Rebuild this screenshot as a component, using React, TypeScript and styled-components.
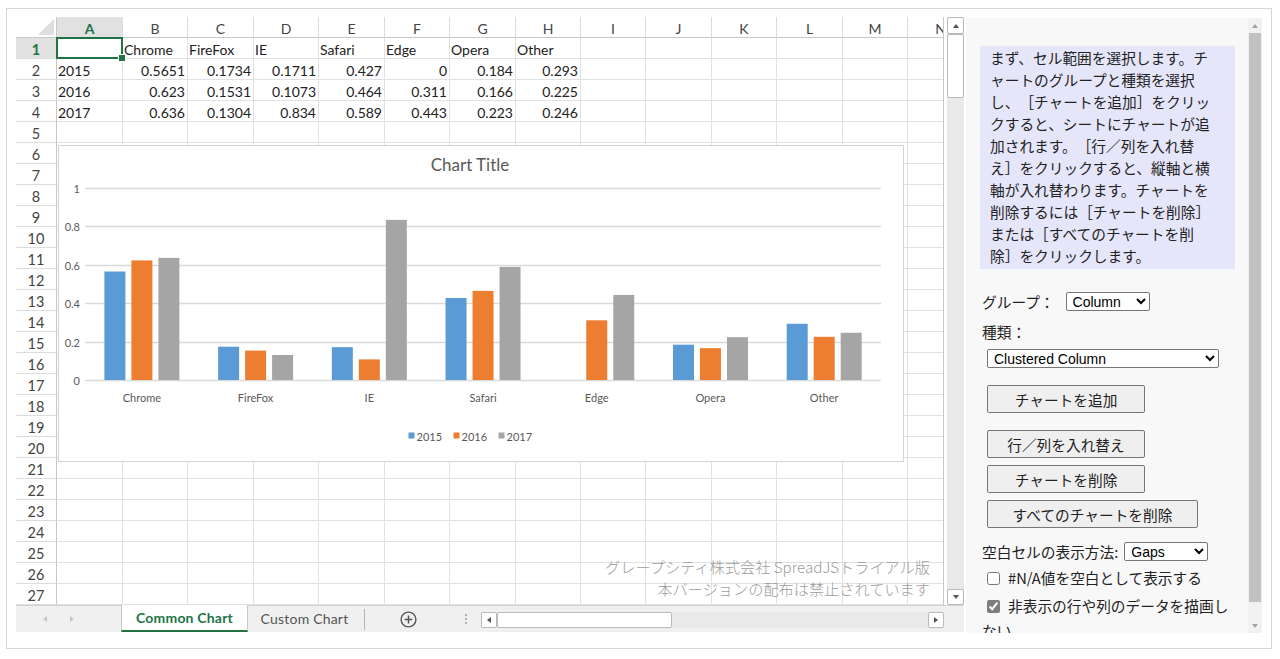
import React from 'react';
import styled, { createGlobalStyle } from 'styled-components';

const GlobalStyle = createGlobalStyle`
  body {
    margin: 0;
    background: #fff;
    font-family: Lato, "Noto Sans CJK JP", sans-serif;
  }
  * { box-sizing: border-box; }
`;

const COLS = ['A', 'B', 'C', 'D', 'E', 'F', 'G', 'H', 'I', 'J', 'K', 'L', 'M', 'N'];
const COL_W = [66, 65, 66, 65, 66, 65, 66, 65, 65, 66, 65, 66, 65, 66];
const ROW_COUNT = 27;

const TABLE: string[][] = [
  ['', 'Chrome', 'FireFox', 'IE', 'Safari', 'Edge', 'Opera', 'Other'],
  ['2015', '0.5651', '0.1734', '0.1711', '0.427', '0', '0.184', '0.293'],
  ['2016', '0.623', '0.1531', '0.1073', '0.464', '0.311', '0.166', '0.225'],
  ['2017', '0.636', '0.1304', '0.834', '0.589', '0.443', '0.223', '0.246'],
];

const CATEGORIES = ['Chrome', 'FireFox', 'IE', 'Safari', 'Edge', 'Opera', 'Other'];
const SERIES = [
  { name: '2015', color: '#5b9bd5', values: [0.5651, 0.1734, 0.1711, 0.427, 0, 0.184, 0.293] },
  { name: '2016', color: '#ed7d31', values: [0.623, 0.1531, 0.1073, 0.464, 0.311, 0.166, 0.225] },
  { name: '2017', color: '#a5a5a5', values: [0.636, 0.1304, 0.834, 0.589, 0.443, 0.223, 0.246] },
];

const DESCRIPTION = [
  'まず、セル範囲を選択します。チ',
  'ャートのグループと種類を選択',
  'し、［チャートを追加］をクリッ',
  'クすると、シートにチャートが追',
  '加されます。［行／列を入れ替',
  'え］をクリックすると、縦軸と横',
  '軸が入れ替わります。チャートを',
  '削除するには［チャートを削除］',
  'または［すべてのチャートを削',
  '除］をクリックします。',
];

/* ---------- frame ---------- */

const Frame = styled.div`
  margin: 8px 0 0 6px;
  width: 1266px;
  height: 641px;
  border: 1px solid #d6d6d6;
  padding: 8px 0 0 9px;
  display: flex;
  align-items: flex-start;
`;

const Spread = styled.div`
  width: 948px;
  height: 615px;
  display: flex;
  flex-direction: column;
`;

const SheetArea = styled.div`
  height: 588px;
  display: flex;
`;

const Viewport = styled.div`
  position: relative;
  width: 928px;
  height: 588px;
  overflow: hidden;
  border-right: 1px solid #c8c8c8;
`;

const Grid = styled.div<{ $cols: string }>`
  display: grid;
  grid-template-columns: ${(p) => p.$cols};
  grid-auto-rows: 21px;
  width: max-content;
`;

const Corner = styled.div`
  position: relative;
  border-right: 1px solid #c8c8c8;
  border-bottom: 1px solid #c8c8c8;
  &::after {
    content: '';
    position: absolute;
    right: 2px;
    bottom: 2px;
    width: 16px;
    height: 16px;
    background: #dedede;
    clip-path: polygon(100% 0, 100% 100%, 0 100%);
  }
`;

const ColHead = styled.div<{ $active?: boolean }>`
  border-right: 1px solid #dcdcdc;
  border-bottom: 1px solid #c8c8c8;
  background: ${(p) => (p.$active ? '#e1e1e1' : '#fff')};
  color: ${(p) => (p.$active ? '#217346' : '#444')};
  font-weight: ${(p) => (p.$active ? 700 : 400)};
  font-size: 14px;
  line-height: 18px;
  padding-top: 3px;
  text-align: center;
  overflow: hidden;
`;

const RowHead = styled(ColHead)`
  border-right: 1px solid #c8c8c8;
  border-bottom: 1px solid #dcdcdc;
  font-size: 14.5px;
`;

const Cell = styled.div<{ $align: 'left' | 'right'; $selected?: boolean }>`
  position: relative;
  border-right: 1px solid #e1e1e1;
  border-bottom: 1px solid #e1e1e1;
  padding: 3px 2px 0 1px;
  font-size: 14px;
  line-height: 18px;
  color: #222;
  text-align: ${(p) => p.$align};
  white-space: nowrap;
  overflow: ${(p) => (p.$selected ? 'visible' : 'hidden')};
  z-index: ${(p) => (p.$selected ? 2 : 0)};
  ${(p) =>
    p.$selected &&
    `
    box-shadow: inset 0 0 0 2px #217346;
    margin: -1px 0 0 -1px;
    border: none;
    width: calc(100% + 1px);
    height: calc(100% + 1px);
    &::after {
      content: '';
      position: absolute;
      right: -3px;
      bottom: -3px;
      width: 6px;
      height: 6px;
      background: #217346;
      border: 1px solid #fff;
    }
  `}
`;

/* ---------- chart ---------- */

const ChartBox = styled.div`
  position: absolute;
  left: 42px;
  top: 128px;
  width: 846px;
  height: 317px;
  background: #fff;
  border: 1px solid #d4d4d4;
`;

const ChartText = styled.text<{ $size: number }>`
  font-family: Lato, sans-serif;
  font-size: ${(p) => p.$size}px;
  fill: #595959;
`;

const PLOT = { left: 26, right: 822, top: 42, bottom: 234 };

const Chart = () => {
  const h = PLOT.bottom - PLOT.top;
  const groupW = (PLOT.right - PLOT.left) / CATEGORIES.length;
  const ticks = [0, 0.2, 0.4, 0.6, 0.8, 1];
  return (
    <ChartBox>
      <svg width="844" height="315" viewBox="0 0 844 315">
        <ChartText $size={17} x={411} y={25} textAnchor="middle">Chart Title</ChartText>
        {ticks.map((t) => {
          const y = Math.round(PLOT.bottom - t * h) + 0.5;
          return (
            <g key={t}>
              <line x1={PLOT.left} x2={PLOT.right} y1={y} y2={y} stroke="#d9d9d9" strokeWidth="1.4" />
              <ChartText $size={11} x={21} y={y + 4} textAnchor="end">{String(t)}</ChartText>
            </g>
          );
        })}
        {CATEGORIES.map((c, gi) => {
          const gx = PLOT.left + gi * groupW;
          return (
            <g key={c}>
              {SERIES.map((s, si) => {
                const bh = s.values[gi] * h;
                return bh > 0 ? (
                  <rect key={s.name} x={gx + 19.4 + si * 27} y={PLOT.bottom - bh} width={21} height={bh}
                    fill={s.color} />
                ) : null;
              })}
              <ChartText $size={11} x={gx + groupW / 2} y={256} textAnchor="middle">{c}</ChartText>
            </g>
          );
        })}
        {SERIES.map((s, i) => (
          <g key={s.name}>
            <rect x={349.5 + i * 45} y={286.5} width={6} height={6} fill={s.color} />
            <ChartText $size={11} x={357.5 + i * 45} y={295}>{s.name}</ChartText>
          </g>
        ))}
      </svg>
    </ChartBox>
  );
};

const Watermark = styled.div`
  position: absolute;
  right: 13px;
  bottom: 6px;
  text-align: right;
  font-family: "Noto Sans CJK JP", sans-serif;
  font-weight: 300;
  font-size: 15.2px;
  line-height: 22px;
  color: #9c9c9c;
`;

/* ---------- scrollbars ---------- */

const VScroll = styled.div`
  width: 20px;
  padding-left: 3px;
  display: flex;
  flex-direction: column;
  background: #fff;
`;

const VTrack = styled.div`
  flex: 1;
  background: #e9e9e9;
  display: flex;
  flex-direction: column;
`;

const ScrollBtn = styled.div<{ $w?: number; $h?: number }>`
  width: ${(p) => (p.$w ? `${p.$w}px` : '100%')};
  height: ${(p) => (p.$h ? `${p.$h}px` : '100%')};
  flex-shrink: 0;
  background: #fff;
  border: 1px solid #b9b9b9;
  border-radius: 2px;
  display: flex;
  align-items: center;
  justify-content: center;
`;

const Tri = styled.span<{ $dir: 'up' | 'down' | 'left' | 'right'; $color?: string }>`
  width: 0;
  height: 0;
  border: 4px solid transparent;
  ${(p) => {
    const c = p.$color || '#666';
    if (p.$dir === 'up') return `border-bottom: 4px solid ${c}; border-top-width: 0; border-left-width: 3.5px; border-right-width: 3.5px;`;
    if (p.$dir === 'down') return `border-top: 4px solid ${c}; border-bottom-width: 0; border-left-width: 3.5px; border-right-width: 3.5px;`;
    if (p.$dir === 'left') return `border-right: 4px solid ${c}; border-left-width: 0; border-top-width: 3.5px; border-bottom-width: 3.5px;`;
    return `border-left: 4px solid ${c}; border-right-width: 0; border-top-width: 3.5px; border-bottom-width: 3.5px;`;
  }}
`;

const Spacer = styled.div`
  flex: 1;
`;

/* ---------- tab strip ---------- */

const TabBar = styled.div`
  height: 27px;
  display: flex;
  background: #f0f0f0;
  border-top: 1px solid #d2d2d2;
`;

const Nav = styled.div`
  width: 105px;
  display: flex;
  align-items: center;
  padding-left: 27px;
  gap: 23px;
`;

const Tab = styled.div<{ $active?: boolean; $w: number }>`
  width: ${(p) => p.$w}px;
  margin-top: -1px;
  display: flex;
  align-items: center;
  justify-content: center;
  font-size: 14px;
  letter-spacing: 0.2px;
  ${(p) =>
    p.$active
      ? `background: #fff; color: #217346; font-weight: 700;
         border-left: 1px solid #c8c8c8; border-right: 1px solid #c8c8c8;
         border-bottom: 2px solid #217346;`
      : `color: #555; position: relative; padding-right: 4px;
         &::after { content: ''; position: absolute; right: 0; top: 4px; bottom: 2px; width: 1px; background: #b4b4b4; }`}
`;

const AddArea = styled.div`
  width: 86px;
  display: flex;
  align-items: center;
  justify-content: center;
`;

const Dots = styled.div`
  width: 30px;
  display: flex;
  flex-direction: column;
  align-items: center;
  justify-content: center;
  gap: 2px;
  span {
    width: 2px;
    height: 2px;
    background: #b0b0b0;
  }
`;

const HScroll = styled.div`
  width: 463px;
  height: 16px;
  margin-top: 6px;
  display: flex;
  background: #e9e9e9;
`;

/* ---------- side panel ---------- */

const Panel = styled.div`
  margin: 1px 0 0 2px;
  width: 296px;
  height: 615px;
  background: #f8f8f8;
  display: flex;
`;

const PanelBody = styled.div`
  flex: 1;
  overflow: hidden;
  padding: 28px 12px 0 14px;
  font-family: "Noto Sans CJK JP", sans-serif;
  font-size: 14.7px;
  color: #222;
  text-spacing-trim: space-all;
`;

const Description = styled.div`
  width: 255px;
  background: #e6e6fa;
  padding: 1px 0 2px 10px;
  line-height: 22px;
  span {
    display: block;
    white-space: nowrap;
  }
`;

const FieldRow = styled.div<{ $mt: number }>`
  display: flex;
  align-items: center;
  height: 20px;
  margin-top: ${(p) => p.$mt}px;
  padding-left: 2px;
  white-space: nowrap;
`;

const FieldLabel = styled.div<{ $mt: number }>`
  margin-top: ${(p) => p.$mt}px;
  padding-left: 2px;
  line-height: 22px;
`;

const Select = styled.select<{ $w: number; $ml: number; $mt?: number }>`
  display: block;
  width: ${(p) => p.$w}px;
  height: 19px;
  margin: ${(p) => p.$mt || 0}px 0 0 ${(p) => p.$ml}px;
  padding: 0 2px;
  font-family: "Liberation Sans", Arial, sans-serif;
  font-size: 14px;
  color: #000;
  background: #fff;
  border: 1px solid #767676;
  border-radius: 2px;
`;

const Button = styled.button<{ $w: number; $mt: number }>`
  display: block;
  width: ${(p) => p.$w}px;
  height: 28px;
  margin: ${(p) => p.$mt}px 0 0 7px;
  padding: 0;
  font-family: "Noto Sans CJK JP", sans-serif;
  font-size: 14.7px;
  color: #222;
  background: #efefef;
  border: 1px solid #767676;
  border-radius: 2px;
  text-spacing-trim: space-all;
`;

const CheckLabel = styled.label<{ $mt: number }>`
  display: block;
  margin-top: ${(p) => p.$mt}px;
  padding-left: 2px;
  line-height: 25px;
  input {
    width: 13px;
    height: 13px;
    margin: 0 8px 0 5px;
    vertical-align: -1px;
    accent-color: #7d7d7d;
  }
`;

const PanelScroll = styled.div`
  width: 14px;
  background: #f1f1f1;
  display: flex;
  flex-direction: column;
  align-items: center;
`;

const ArrowCell = styled.div`
  height: 15px;
  display: flex;
  align-items: center;
  justify-content: center;
`;

const Thumb = styled.div`
  width: 12px;
  height: 569px;
  background: #c1c1c1;
`;

/* ---------- app ---------- */

const Sheet = () => {
  const template = `41px ${COL_W.map((w) => `${w}px`).join(' ')}`;
  const cells: React.ReactNode[] = [<Corner key="corner" />];
  COLS.forEach((c, i) => cells.push(<ColHead key={`h${c}`} $active={i === 0}>{c}</ColHead>));
  for (let r = 1; r <= ROW_COUNT; r++) {
    cells.push(<RowHead key={`r${r}`} $active={r === 1}>{r}</RowHead>);
    const row = TABLE[r - 1];
    COLS.forEach((c, ci) => {
      const text = row ? row[ci] ?? '' : '';
      const align = r === 1 || ci === 0 ? 'left' : 'right';
      cells.push(
        <Cell key={`${c}${r}`} $align={align} $selected={r === 1 && ci === 0}>{text}</Cell>
      );
    });
  }
  return (
    <Viewport>
      <Grid $cols={template}>{cells}</Grid>
      <Chart />
      <Watermark>
        グレープシティ株式会社 SpreadJSトライアル版
        <br />
        本バージョンの配布は禁止されています
      </Watermark>
    </Viewport>
  );
};

export default function App() {
  return (
    <>
      <GlobalStyle />
      <Frame>
        <Spread>
          <SheetArea>
            <Sheet />
            <VScroll>
              <VTrack>
                <ScrollBtn $h={17}><Tri $dir="up" $color="#555" /></ScrollBtn>
                <ScrollBtn $h={64} />
                <Spacer />
                <ScrollBtn $h={16}><Tri $dir="down" $color="#555" /></ScrollBtn>
              </VTrack>
            </VScroll>
          </SheetArea>
          <TabBar>
            <Nav>
              <Tri $dir="left" $color="#c4c4c4" />
              <Tri $dir="right" $color="#c4c4c4" />
            </Nav>
            <Tab $active $w={127}>Common Chart</Tab>
            <Tab $w={117}>Custom Chart</Tab>
            <AddArea>
              <svg width="17" height="17" viewBox="0 0 17 17">
                <circle cx="8.5" cy="8.5" r="7.4" fill="none" stroke="#555" strokeWidth="1.4" />
                <path d="M8.5 4.6v7.8M4.6 8.5h7.8" stroke="#555" strokeWidth="1.5" />
              </svg>
            </AddArea>
            <Dots><span /><span /><span /></Dots>
            <HScroll>
              <ScrollBtn $w={16}><Tri $dir="left" $color="#555" /></ScrollBtn>
              <ScrollBtn $w={175} />
              <Spacer />
              <ScrollBtn $w={16}><Tri $dir="right" $color="#555" /></ScrollBtn>
            </HScroll>
          </TabBar>
        </Spread>

        <Panel>
          <PanelBody>
            <Description>
              {DESCRIPTION.map((l) => <span key={l}>{l}</span>)}
            </Description>
            <FieldRow $mt={22}>
              グループ：
              <Select $w={84} $ml={11} defaultValue="Column">
                <option>Column</option>
                <option>Line</option>
                <option>Pie</option>
              </Select>
            </FieldRow>
            <FieldLabel $mt={10}>種類：</FieldLabel>
            <Select $w={232} $ml={7} $mt={6} defaultValue="Clustered Column">
              <option>Clustered Column</option>
              <option>Stacked Column</option>
            </Select>
            <Button $w={158} $mt={17}>チャートを追加</Button>
            <Button $w={158} $mt={17}>行／列を入れ替え</Button>
            <Button $w={158} $mt={7}>チャートを削除</Button>
            <Button $w={211} $mt={7}>すべてのチャートを削除</Button>
            <FieldRow $mt={13}>
              空白セルの表示方法:
              <Select $w={84} $ml={6} defaultValue="Gaps">
                <option>Gaps</option>
                <option>Zero</option>
              </Select>
            </FieldRow>
            <CheckLabel $mt={4}>
              <input type="checkbox" />#N/A値を空白として表示する
            </CheckLabel>
            <CheckLabel $mt={3}>
              <input type="checkbox" defaultChecked />非表示の行や列のデータを描画しない
            </CheckLabel>
          </PanelBody>
          <PanelScroll>
            <ArrowCell><Tri $dir="up" $color="#a3a3a3" /></ArrowCell>
            <Thumb />
            <Spacer />
            <ArrowCell><Tri $dir="down" $color="#a3a3a3" /></ArrowCell>
          </PanelScroll>
        </Panel>
      </Frame>
    </>
  );
}
